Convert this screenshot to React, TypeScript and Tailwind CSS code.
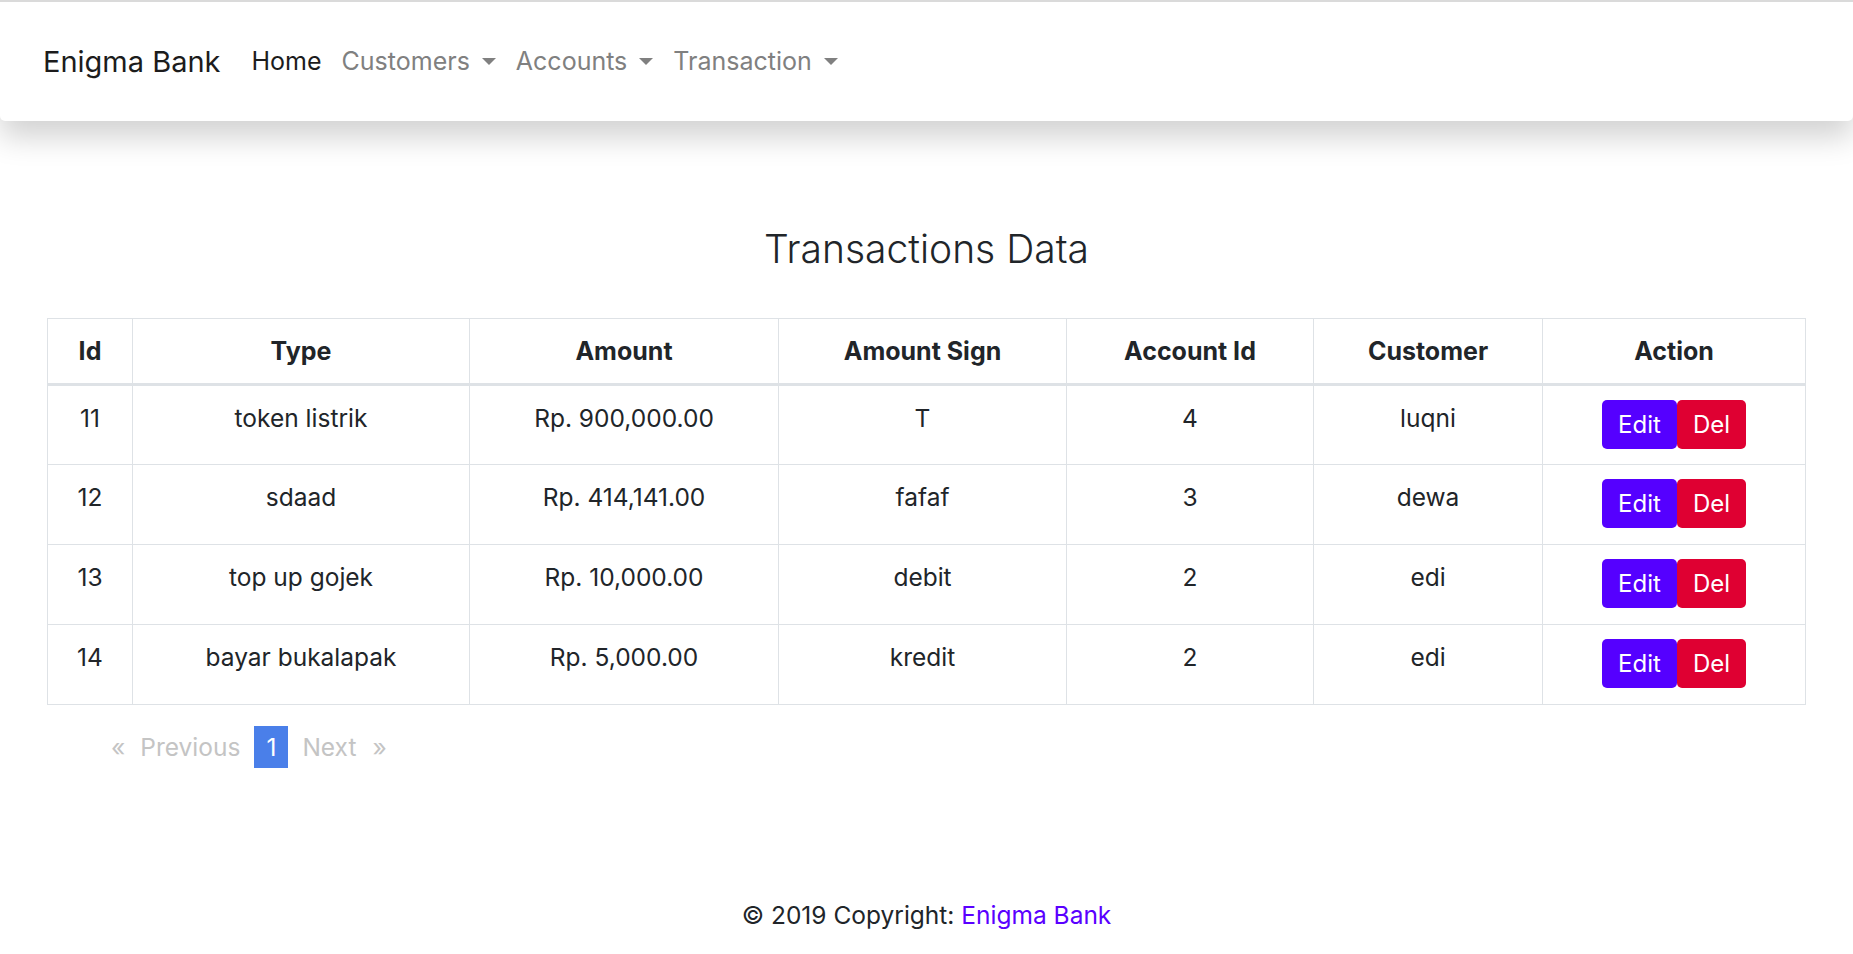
import React from "react";

const rows = [
  { id: 11, type: "token listrik", amount: "Rp. 900,000.00", sign: "T", account: 4, customer: "luqni" },
  { id: 12, type: "sdaad", amount: "Rp. 414,141.00", sign: "fafaf", account: 3, customer: "dewa" },
  { id: 13, type: "top up gojek", amount: "Rp. 10,000.00", sign: "debit", account: 2, customer: "edi" },
  { id: 14, type: "bayar bukalapak", amount: "Rp. 5,000.00", sign: "kredit", account: 2, customer: "edi" },
];

const Caret = () => (
  <span className="ml-[12px] inline-block h-0 w-0 border-x-[7px] border-t-[7px] border-x-transparent border-t-current align-middle" />
);

export default function App() {
  return (
    <div className="min-h-screen bg-white font-['Inter',sans-serif] text-[24.5px] text-[#212529]">
      <nav className="flex h-[121px] items-center rounded-b-[5px] border-t-2 border-[#dadada] bg-white pl-[43px] text-[25px] shadow-[0_16px_30px_rgba(0,0,0,0.18)]">
        <span className="mr-[21px] text-[29px] leading-[40px] text-[#1c1c1c]">Enigma Bank</span>
        <a className="px-[10px] leading-[35px] text-[#1c1c1c]">Home</a>
        <a className="flex items-center px-[10px] leading-[35px] text-[#808080]">
          Customers
          <Caret />
        </a>
        <a className="flex items-center px-[10px] leading-[35px] text-[#808080]">
          Accounts
          <Caret />
        </a>
        <a className="flex items-center px-[10px] leading-[35px] text-[#808080]">
          Transaction
          <Caret />
        </a>
      </nav>

      <main className="flex flex-col items-center">
        <h2 className="mt-[104px] mb-[45px] text-[39px] font-light leading-[48px] text-[#212529]">Transactions Data</h2>

        <div className="w-full px-[47px]">
          <table className="w-full table-fixed border-collapse border border-[#dee2e6] text-center">
            <colgroup>
              <col className="w-[85px]" />
              <col className="w-[337px]" />
              <col className="w-[309px]" />
              <col className="w-[288px]" />
              <col className="w-[247px]" />
              <col className="w-[229px]" />
              <col />
            </colgroup>
            <thead>
              <tr className="border-b-[3px] border-[#dee2e6]">
                {["Id", "Type", "Amount", "Amount Sign", "Account Id", "Customer", "Action"].map((h) => (
                  <th key={h} className="h-[66px] border-x border-[#dee2e6] align-middle text-[25px] font-bold leading-[35px]">
                    {h}
                  </th>
                ))}
              </tr>
            </thead>
            <tbody>
              {rows.map((r) => (
                <tr key={r.id} className="border-b border-[#dee2e6]">
                  <td className="h-[80px] border-x border-[#dee2e6] pt-[15px] align-top leading-[35px]">{r.id}</td>
                  <td className="border-x border-[#dee2e6] pt-[15px] align-top leading-[35px]">{r.type}</td>
                  <td className="border-x border-[#dee2e6] pt-[15px] align-top leading-[35px]">{r.amount}</td>
                  <td className="border-x border-[#dee2e6] pt-[15px] align-top leading-[35px]">{r.sign}</td>
                  <td className="border-x border-[#dee2e6] pt-[15px] align-top leading-[35px]">{r.account}</td>
                  <td className="border-x border-[#dee2e6] pt-[15px] align-top leading-[35px]">{r.customer}</td>
                  <td className="border-x border-[#dee2e6] pt-[14px] align-top">
                    <div className="flex justify-center">
                      <button className="h-[49px] w-[75px] rounded-[5px] bg-[#5500ff] text-[24px] leading-[35px] text-white">Edit</button>
                      <button className="h-[49px] w-[69px] rounded-[5px] bg-[#df0032] text-[24px] leading-[35px] text-white">Del</button>
                    </div>
                  </td>
                </tr>
              ))}
            </tbody>
          </table>

          <div className="mt-[21px] flex h-[42px] items-center pl-[64px] text-[#c4c4c4]">
            <span>«</span>
            <span className="ml-[15px]">Previous</span>
            <span className="ml-[14px] flex h-[42px] w-[34px] items-center justify-center bg-[#4a7fe9] text-white">1</span>
            <span className="ml-[14px]">Next</span>
            <span className="ml-[16px]">»</span>
          </div>
        </div>

        <footer className="mt-[130px] leading-[35px] text-[#212529]">
          © 2019 Copyright: <a className="text-[#5a00ff]">Enigma Bank</a>
        </footer>
      </main>
    </div>
  );
}
